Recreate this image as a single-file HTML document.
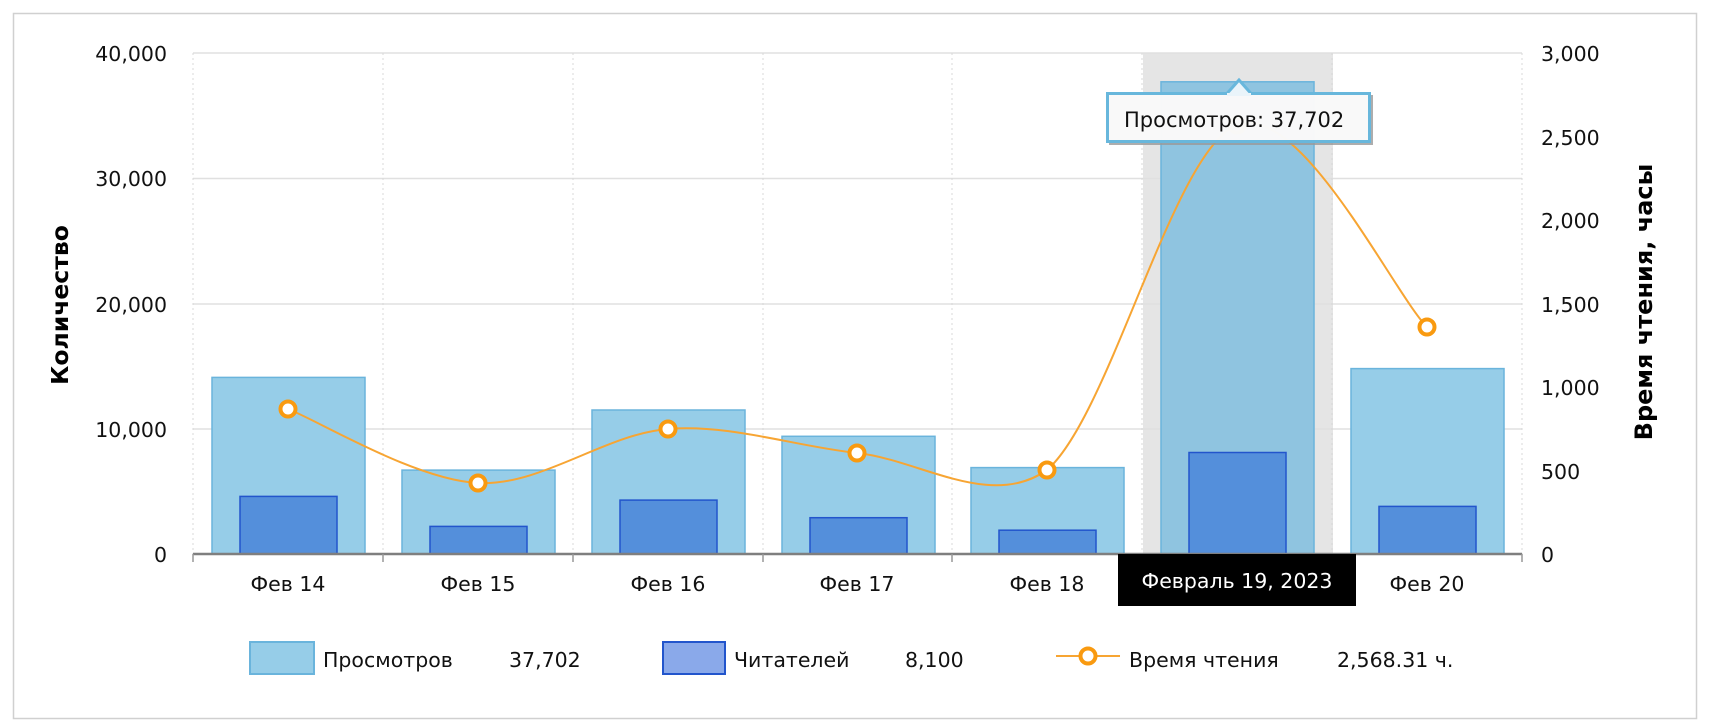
<!DOCTYPE html>
<html><head><meta charset="utf-8"><style>
html,body{margin:0;padding:0;background:#fff;}
svg{display:block;font-family:"DejaVu Sans","Liberation Sans",sans-serif;}
</style></head><body>
<svg width="1710" height="728" viewBox="0 0 1710 728" xmlns="http://www.w3.org/2000/svg">
<rect x="13.5" y="13.5" width="1683" height="705" fill="#fff" stroke="#d0d0d0" stroke-width="1.5"/>
<rect x="1143" y="53" width="190" height="501" fill="#e5e5e5"/>
<g stroke="#e0e0e0" stroke-width="1.5">
<line x1="193" y1="53" x2="1522" y2="53"/>
<line x1="193" y1="178.5" x2="1522" y2="178.5"/>
<line x1="193" y1="304" x2="1522" y2="304"/>
<line x1="193" y1="429" x2="1522" y2="429"/>
</g>
<g stroke="#d8d8d8" stroke-width="1" stroke-dasharray="2,3">
<line x1="193" y1="53" x2="193" y2="554"/>
<line x1="383" y1="53" x2="383" y2="554"/>
<line x1="573" y1="53" x2="573" y2="554"/>
<line x1="763" y1="53" x2="763" y2="554"/>
<line x1="952" y1="53" x2="952" y2="554"/>
<line x1="1142" y1="53" x2="1142" y2="554"/>
<line x1="1332" y1="53" x2="1332" y2="554"/>
<line x1="1522" y1="53" x2="1522" y2="554"/>
</g>
<g fill="#96cde8" stroke="#6ab4dc" stroke-width="1.5">
<rect x="212" y="377.4" width="153" height="176.6"/>
<rect x="402" y="470.1" width="153" height="83.9"/>
<rect x="592" y="410" width="153" height="144"/>
<rect x="782" y="436.3" width="153" height="117.7"/>
<rect x="971" y="467.6" width="153" height="86.4"/>
<rect x="1161" y="81.8" width="153" height="472.2" fill="#8fc4e0"/>
<rect x="1351" y="368.6" width="153" height="185.4"/>
</g>
<g fill="#548fdb" stroke="#2255cc" stroke-width="1.5">
<rect x="240" y="496.4" width="97" height="57.6"/>
<rect x="430" y="526.4" width="97" height="27.6"/>
<rect x="620" y="500.1" width="97" height="53.9"/>
<rect x="810" y="517.7" width="97" height="36.3"/>
<rect x="999" y="530.2" width="97" height="23.8"/>
<rect x="1189" y="452.5" width="97" height="101.5"/>
<rect x="1379" y="506.4" width="97" height="47.6"/>
</g>
<line x1="193" y1="554" x2="1522" y2="554" stroke="#7f7f7f" stroke-width="2.5"/>
<g stroke="#999" stroke-width="1.5">
<line x1="193" y1="554" x2="193" y2="562"/><line x1="383" y1="554" x2="383" y2="562"/>
<line x1="573" y1="554" x2="573" y2="562"/><line x1="763" y1="554" x2="763" y2="562"/>
<line x1="952" y1="554" x2="952" y2="562"/><line x1="1142" y1="554" x2="1142" y2="562"/>
<line x1="1332" y1="554" x2="1332" y2="562"/><line x1="1522" y1="554" x2="1522" y2="562"/>
</g>
<path d="M288,409 C319.7,421.3 414.7,479.7 478,483 C541.3,486.3 604.8,434 668,429 C731.2,424 793.8,446.2 857,453 C920.2,459.8 990,510 1047,470 C1110.3,415.3 1173.7,149.3 1237,125 C1300.3,100.7 1393.7,293.3 1427,327" fill="none" stroke="#f7a533" stroke-width="2"/>
<g fill="#fff" stroke="#f99a10" stroke-width="4">
<circle cx="288" cy="409" r="7.5"/><circle cx="478" cy="483" r="7.5"/>
<circle cx="668" cy="429" r="7.5"/><circle cx="857" cy="453" r="7.5"/>
<circle cx="1047" cy="470" r="7.5"/><circle cx="1237" cy="125" r="7.5"/>
<circle cx="1427" cy="327" r="7.5"/>
</g>
<rect x="1109" y="95" width="264" height="50" fill="#999" opacity="0.8"/>
<rect x="1107.5" y="93.5" width="262" height="48" fill="#fff" fill-opacity="0.93" stroke="#68b7dc" stroke-width="3"/>
<path d="M1227,93.5 L1239,80 L1251,93.5" fill="#eaf4fa" stroke="#68b7dc" stroke-width="3"/>
<rect x="1227" y="93" width="24" height="3" fill="#eaf4fa"/>
<text x="1124" y="127" font-size="21" fill="#111">Просмотров: 37,702</text>
<g font-size="20.5" fill="#111" text-anchor="end">
<text x="167" y="61">40,000</text>
<text x="167" y="186">30,000</text>
<text x="167" y="312">20,000</text>
<text x="167" y="437">10,000</text>
<text x="167" y="562">0</text>
</g>
<g font-size="20.5" fill="#111">
<text x="1541" y="61">3,000</text>
<text x="1541" y="145">2,500</text>
<text x="1541" y="228">2,000</text>
<text x="1541" y="312">1,500</text>
<text x="1541" y="395">1,000</text>
<text x="1541" y="479">500</text>
<text x="1541" y="562">0</text>
</g>
<text transform="translate(68,305) rotate(-90)" font-size="23.5" font-weight="bold" text-anchor="middle" fill="#000">Количество</text>
<text transform="translate(1652,302) rotate(-90)" font-size="24" font-weight="bold" text-anchor="middle" fill="#000">Время чтения, часы</text>
<g font-size="20.5" fill="#111" text-anchor="middle">
<text x="288" y="591">Фев 14</text>
<text x="478" y="591">Фев 15</text>
<text x="668" y="591">Фев 16</text>
<text x="857" y="591">Фев 17</text>
<text x="1047" y="591">Фев 18</text>
<text x="1427" y="591">Фев 20</text>
</g>
<rect x="1118" y="554" width="238" height="52" fill="#000"/>
<text x="1237" y="588" font-size="20.5" fill="#fff" text-anchor="middle">Февраль 19, 2023</text>
<rect x="250" y="642" width="64" height="32" fill="#96cde8" stroke="#6ab4dc" stroke-width="2"/>
<text x="323" y="667" font-size="20.5" fill="#111">Просмотров</text>
<text x="509" y="667" font-size="20.5" fill="#111">37,702</text>
<rect x="663" y="642" width="62" height="32" fill="#8aa9ea" stroke="#2255cc" stroke-width="2"/>
<text x="734" y="667" font-size="20.5" fill="#111">Читателей</text>
<text x="905" y="667" font-size="20.5" fill="#111">8,100</text>
<line x1="1056" y1="656" x2="1120" y2="656" stroke="#f7a533" stroke-width="2"/>
<circle cx="1088" cy="656" r="7.5" fill="#fff" stroke="#f99a10" stroke-width="4"/>
<text x="1129" y="667" font-size="20.5" fill="#111">Время чтения</text>
<text x="1337" y="667" font-size="20.5" fill="#111">2,568.31 ч.</text>
</svg>
</body></html>
